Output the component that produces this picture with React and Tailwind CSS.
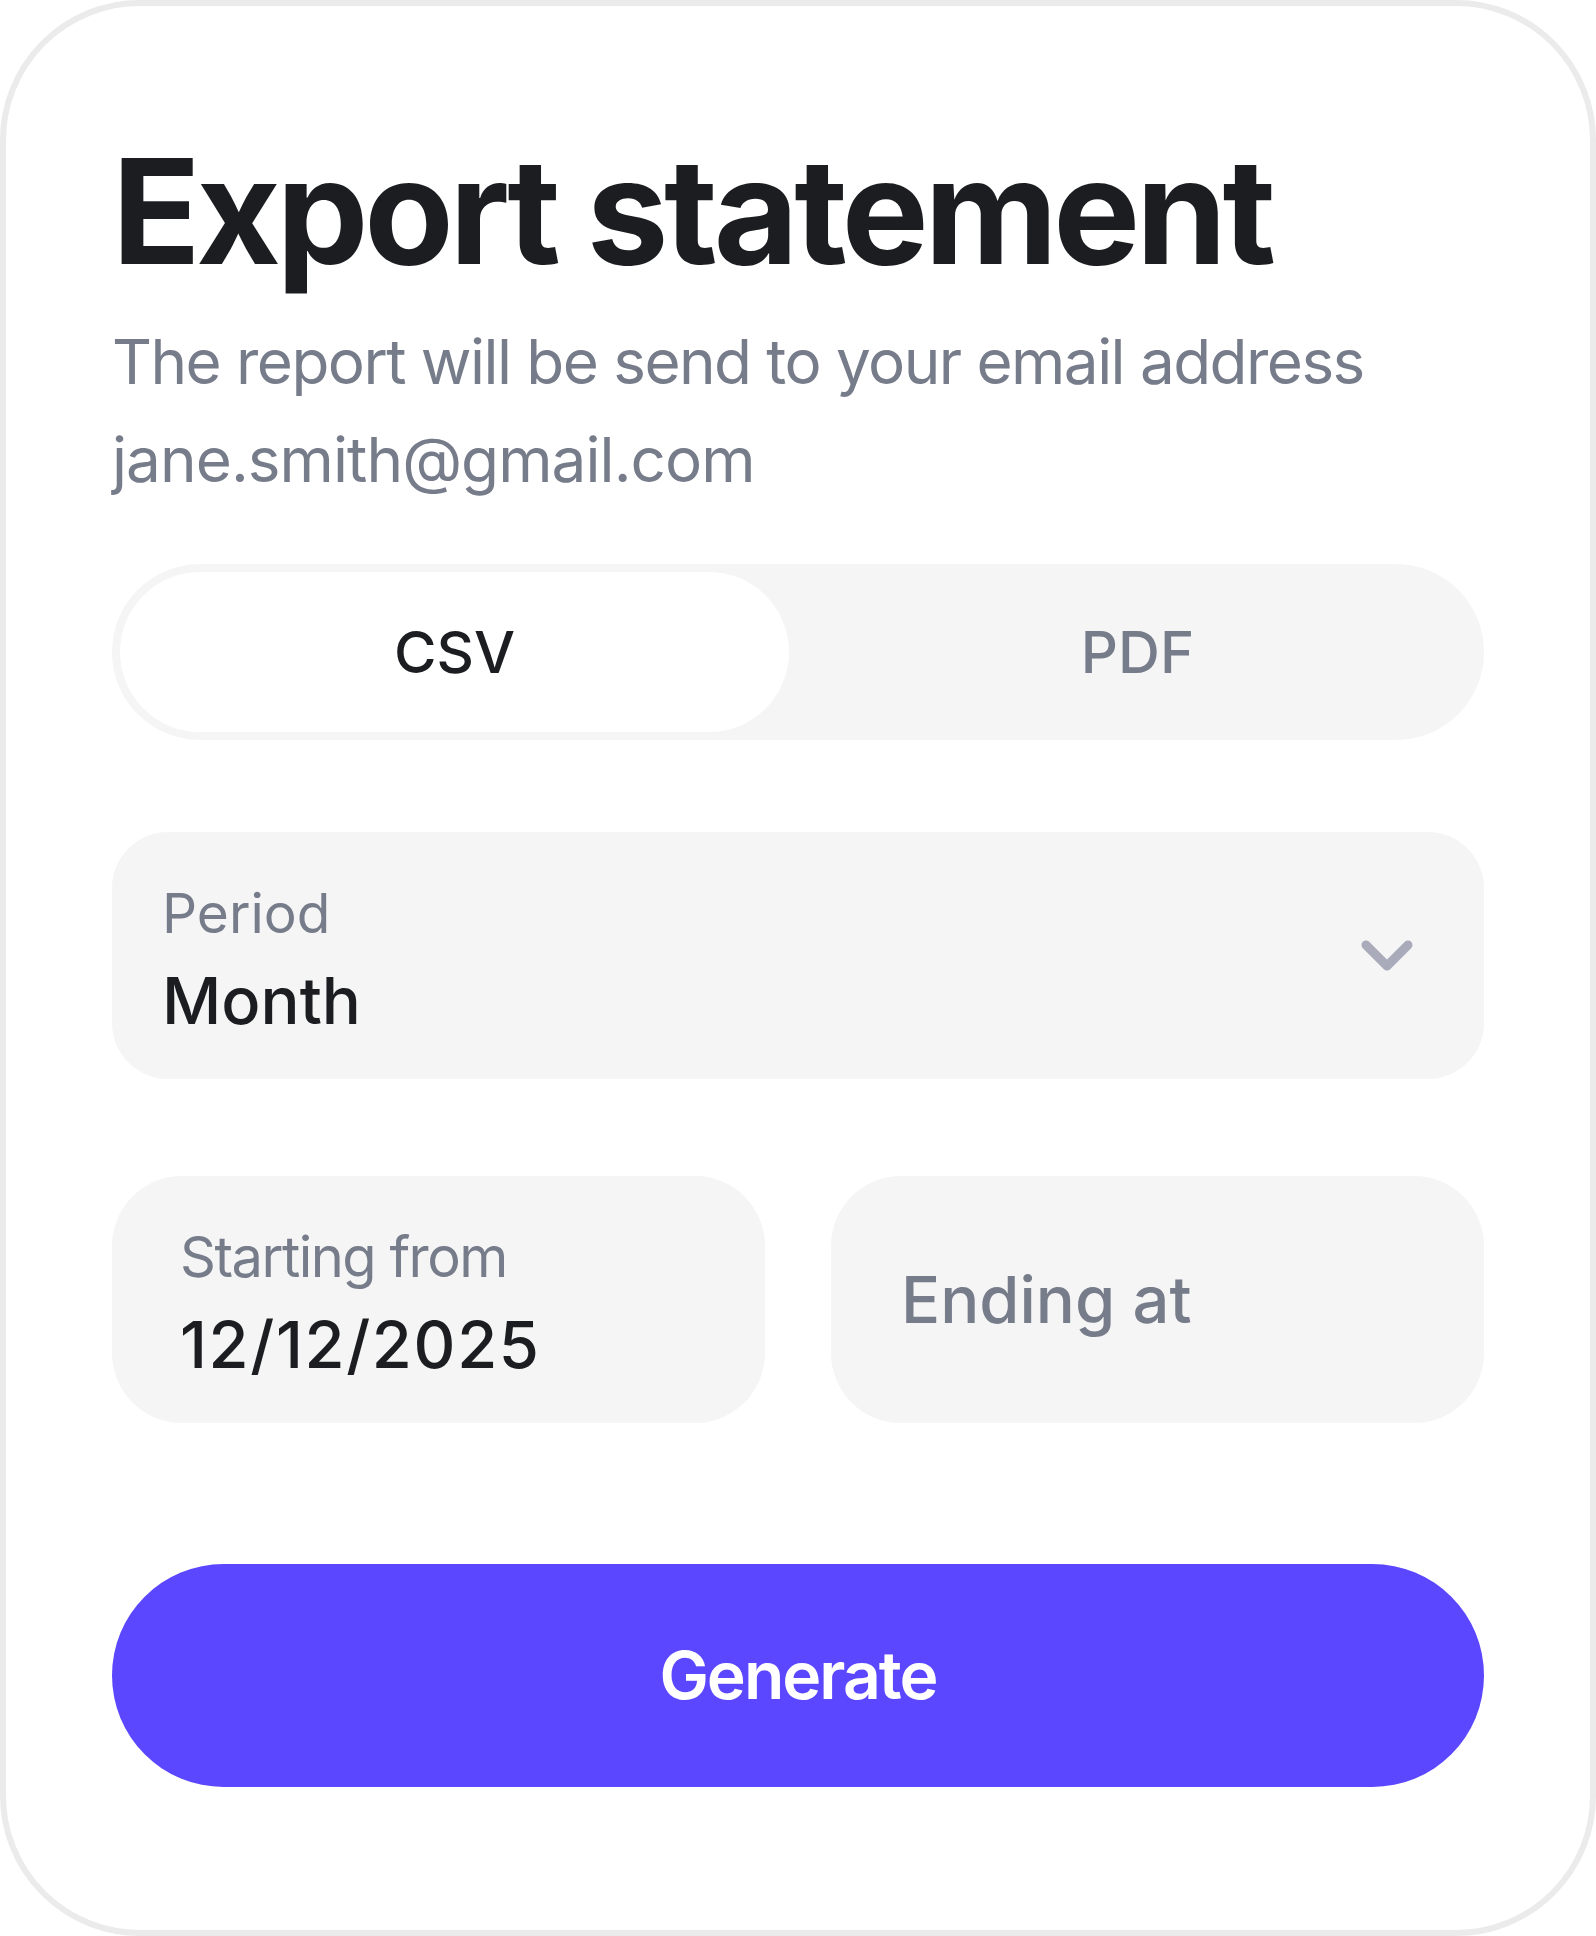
import React from "react";

const Chevron = () => (
  <svg width="52" height="32" viewBox="0 0 52 32" fill="none">
    <path
      d="M5 5 L26 26 L47 5"
      stroke="#a9abbb"
      strokeWidth="9"
      strokeLinecap="round"
      strokeLinejoin="round"
    />
  </svg>
);

export default function App() {
  const font = { fontFamily: "Inter, 'Noto Sans', sans-serif" };
  return (
    <div style={font} className="w-[1596px] h-[1936px] bg-white">
      <div className="w-full h-full border-[6px] border-[#ebebeb] rounded-[140px] bg-white px-[106px] pt-[132px]">
        {/* Header */}
        <h1 className="text-[146px] leading-none font-bold tracking-[-0.03em] text-[#1c1d21]">
          Export statement
        </h1>
        <p className="mt-[29px] text-[62px] leading-[98px] text-[#767c8a]">
          <span className="tracking-[-0.025em]">The report will be send to your email address</span>
          <br />
          <span className="tracking-[-0.015em]">jane.smith@gmail.com</span>
        </p>

        {/* Format toggle */}
        <div className="mt-[55px] h-[176px] rounded-full bg-[#f5f5f5] p-2 flex">
          <div className="w-[669px] rounded-full bg-white flex items-center justify-center text-[58px] font-medium text-[#1c1d21]">
            CSV
          </div>
          <div className="flex-1 pl-[10px] flex items-center justify-center text-[58px] font-medium text-[#767c8a]">
            PDF
          </div>
        </div>

        {/* Period select */}
        <div className="mt-[92px] h-[247px] rounded-[56px] bg-[#f5f5f5] pl-[50px] pr-[71px] pt-[8px] flex items-center justify-between">
          <div className="flex flex-col">
            <span className="text-[55px] leading-[66px] text-[#767c8a]">Period</span>
            <span className="mt-[16px] text-[65px] leading-[78px] font-medium text-[#1c1d21]">Month</span>
          </div>
          <div className="-mt-[8px]">
            <Chevron />
          </div>
        </div>

        {/* Date range */}
        <div className="mt-[97px] grid grid-cols-2 gap-[66px]">
          <div className="h-[247px] rounded-[70px] bg-[#f5f5f5] pl-[68px] pt-[8px] flex flex-col justify-center">
            <span className="text-[56px] leading-[67px] text-[#767c8a] tracking-[-0.027em]">Starting from</span>
            <span className="mt-[15px] text-[65px] leading-[78px] font-medium text-[#1c1d21] tracking-[0.025em]">12/12/2025</span>
          </div>
          <div className="h-[247px] rounded-[70px] bg-[#f5f5f5] pl-[70px] flex items-center">
            <span className="text-[65px] leading-[78px] font-medium text-[#767c8a]">Ending at</span>
          </div>
        </div>

        {/* Submit */}
        <button className="mt-[141px] w-full h-[223px] rounded-full bg-[#5b47ff] text-white text-[66px] font-semibold tracking-[-0.03em]">
          Generate
        </button>
      </div>
    </div>
  );
}
